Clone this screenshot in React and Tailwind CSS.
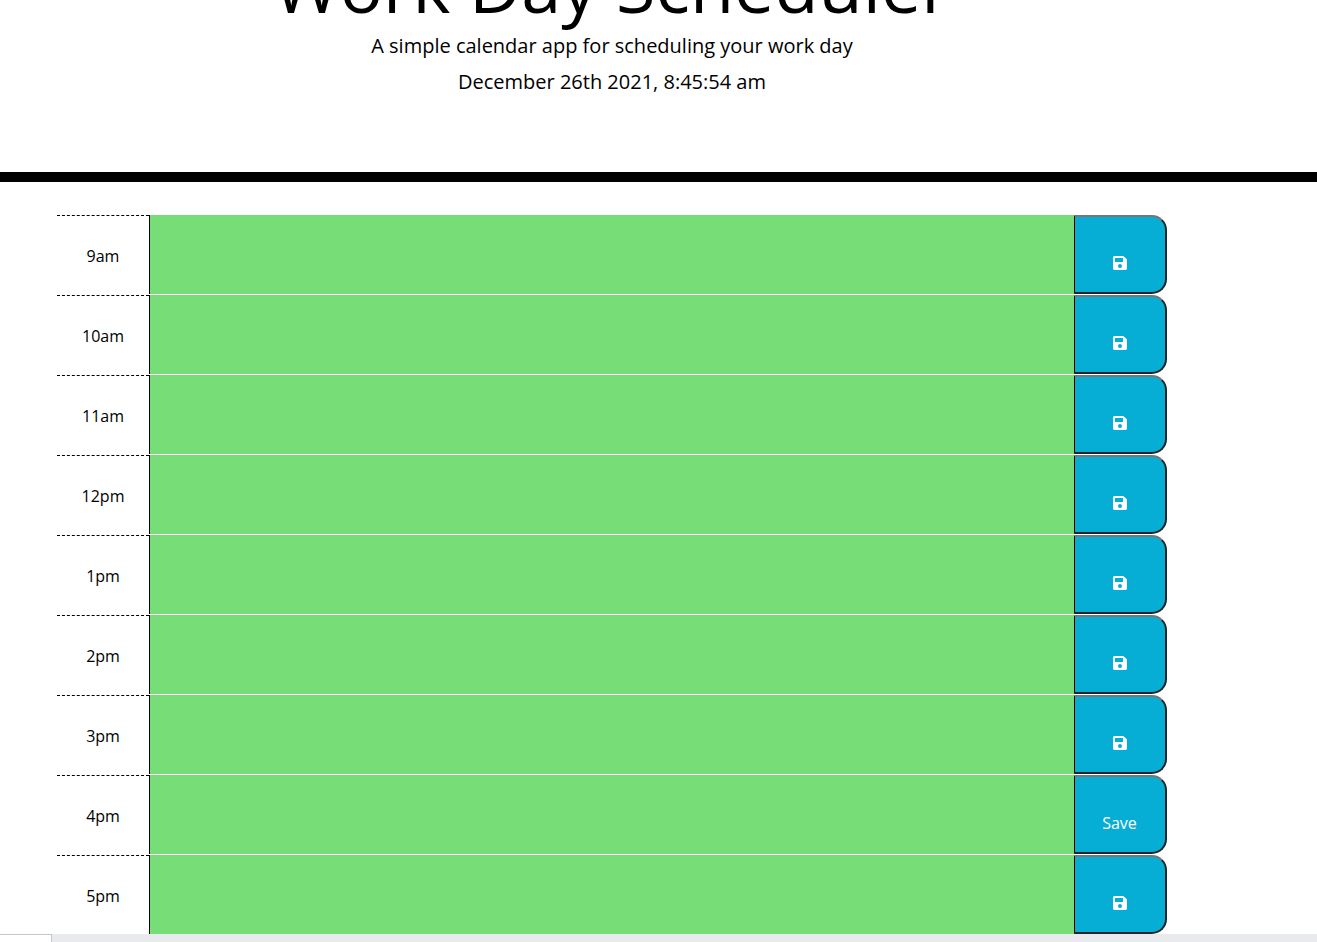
import React from "react";

const hours = ["9am", "10am", "11am", "12pm", "1pm", "2pm", "3pm", "4pm", "5pm"];

function SaveIcon() {
  return (
    <svg viewBox="0 0 448 512" className="h-4 w-[14px] fill-current" aria-hidden="true">
      <path d="M433.9 129.9l-83.9-83.9A48 48 0 0 0 316.1 32H48C21.5 32 0 53.5 0 80v352c0 26.500 21.500 48 48 48h352c26.500 0 48-21.500 48-48V163.900a48 48 0 0 0-14.100-34zM224 416c-35.300 0-64-28.700-64-64s28.700-64 64-64 64 28.700 64 64-28.700 64-64 64zm96-304.500V212c0 6.600-5.400 12-12 12H76c-6.600 0-12-5.400-12-12V108c0-6.600 5.400-12 12-12h228.500c3.200 0 6.200 1.300 8.500 3.500l3.500 3.500A12 12 0 0 1 320 111.500z" />
    </svg>
  );
}

function TimeBlock({ hour }) {
  return (
    <div className="grid h-20 grid-cols-[92px_1fr_93px] pb-px">
      <label
        htmlFor={"task-" + hour}
        className="flex items-center justify-center border-t border-dashed border-black pt-px"
      >
        {hour}
      </label>
      <textarea
        id={"task-" + hour}
        className="block h-full w-full resize-none border-l border-black bg-[#77dd77] px-3 py-2 outline-none"
      />
      <button
        type="button"
        aria-label={"Save " + hour}
        className="flex items-center justify-center rounded-r-[15px] border-2 border-l border-[#212529] border-l-black border-t-[#767676] bg-[#06aed5] pr-px pt-4 text-white"
      >
        {hour === "4pm" ? "Save" : <SaveIcon />}
      </button>
    </div>
  );
}

export default function App() {
  return (
    <div className="flex min-h-screen flex-col overflow-x-hidden bg-white font-['Open_Sans',sans-serif] text-base text-black">
      <header className="overflow-hidden border-b-[10px] border-black pb-[72px] text-center">
        <div className="mx-[57px] max-w-[1110px]">
          <h1 className="-mt-[58px] text-[72px] leading-[86px]">Work Day Scheduler</h1>
          <p className="text-xl leading-9">A simple calendar app for scheduling your work day</p>
          <p className="text-xl leading-9">December 26th 2021, 8:45:54 am</p>
        </div>
      </header>
      <main className="mx-[57px] max-w-[1110px] pt-[33px]">
        {hours.map((hour) => (
          <TimeBlock key={hour} hour={hour} />
        ))}
      </main>
      <footer className="-mt-px flex h-2 bg-[#e9eaee]">
        <div className="w-[52px] border-r border-t border-[#c8c8c8] bg-white" />
      </footer>
    </div>
  );
}
